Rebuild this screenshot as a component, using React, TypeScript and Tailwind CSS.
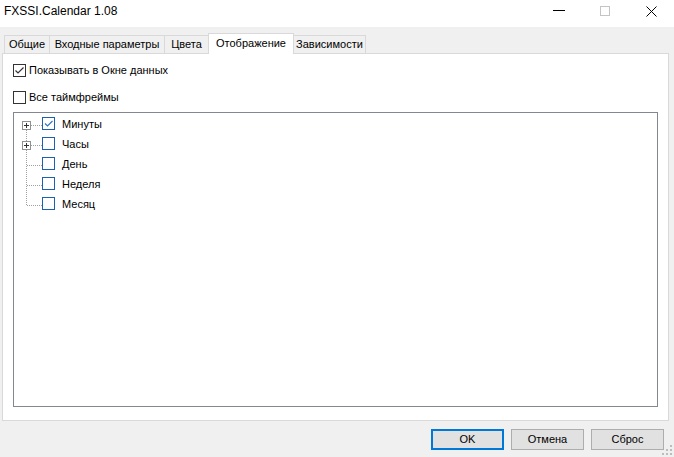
import React from "react";

function TopCheck({ checked }: { checked: boolean }) {
  return (
    <div className="w-[13px] h-[13px] border border-[#333333] bg-white shrink-0 flex items-center justify-center">
      {checked && (
        <svg width="11" height="11" viewBox="0 0 11 11">
          <polyline points="1.5,5.5 4,8 9.5,2.5" fill="none" stroke="#333333" strokeWidth="1.2" />
        </svg>
      )}
    </div>
  );
}

function TreeCheck({ checked }: { checked: boolean }) {
  return (
    <div className="w-[13px] h-[13px] border border-[#1e60b0] bg-white shrink-0 flex items-center justify-center">
      {checked && (
        <svg width="11" height="11" viewBox="0 0 11 11">
          <polyline points="2,5.5 4.5,8 9.5,3" fill="none" stroke="#2f76c8" strokeWidth="1.2" />
        </svg>
      )}
    </div>
  );
}

function TreeLines() {
  const rows = [11.5, 31.5, 51.5, 71.5, 91.5];
  return (
    <svg width="28" height="100" viewBox="0 0 28 100" className="shrink-0">
      <line x1="12.5" y1="16" x2="12.5" y2="92" stroke="#a0a0a0" strokeDasharray="1 1" />
      {rows.map((y, i) => (
        <line key={i} x1={i < 2 ? 17 : 13} y1={y} x2="28" y2={y} stroke="#a0a0a0" strokeDasharray="1 1" />
      ))}
      {[0, 1].map((i) => {
        const cy = rows[i];
        return (
          <g key={i}>
            <rect x="8.5" y={cy - 4} width="8" height="8" fill="white" stroke="#919191" />
            <line x1="10" y1={cy} x2="15" y2={cy} stroke="#333333" />
            <line x1="12.5" y1={cy - 2.5} x2="12.5" y2={cy + 2.5} stroke="#333333" />
          </g>
        );
      })}
    </svg>
  );
}

export default function App() {
  const tabs = [
    { label: "Общие", w: "w-[46px]" },
    { label: "Входные параметры", w: "w-[116px]" },
    { label: "Цвета", w: "w-[45px]" },
    { label: "Отображение", w: "w-[86px]", active: true },
    { label: "Зависимости", w: "w-[73px]" },
  ];
  const items = [
    { label: "Минуты", checked: true },
    { label: "Часы", checked: false },
    { label: "День", checked: false },
    { label: "Неделя", checked: false },
    { label: "Месяц", checked: false },
  ];
  return (
    <div className="relative w-[674px] h-[457px] bg-[#f0f0f0] flex flex-col overflow-hidden font-['Liberation_Sans',Arial,sans-serif] text-[11px] text-black leading-none">
      {/* title bar */}
      <div className="h-[27px] bg-white flex items-start shrink-0">
        <div className="h-[22px] flex items-center pl-[4px] text-[12px]">FXSSI.Calendar 1.08</div>
        <div className="ml-auto flex h-[22px]">
          <div className="w-[46px] h-full flex items-center justify-center">
            <svg width="12" height="2" viewBox="0 0 12 2">
              <line x1="0" y1="0.5" x2="12" y2="0.5" stroke="#000" />
            </svg>
          </div>
          <div className="w-[46px] h-full flex items-center justify-center">
            <svg width="10" height="10" viewBox="0 0 10 10">
              <rect x="0.5" y="0.5" width="9" height="9" fill="none" stroke="#c4c4c4" />
            </svg>
          </div>
          <div className="w-[46px] h-full flex items-center justify-center">
            <svg width="11" height="11" viewBox="0 0 11 11">
              <line x1="0.5" y1="0.5" x2="10.5" y2="10.5" stroke="#000" />
              <line x1="10.5" y1="0.5" x2="0.5" y2="10.5" stroke="#000" />
            </svg>
          </div>
        </div>
      </div>

      {/* tabs */}
      <div className="h-[26px] flex items-end pl-[4px] shrink-0">
        {tabs.map((t, i) =>
          t.active ? (
            <div
              key={i}
              className={`${t.w} -ml-px relative z-10 -mb-px h-[21px] bg-white border border-b-0 border-[#d9d9d9] flex items-center justify-center pb-[2px] whitespace-nowrap`}
            >
              {t.label}
            </div>
          ) : (
            <div
              key={i}
              className={`${t.w} ${i > 0 ? "-ml-px" : ""} h-[18px] bg-[#f0f0f0] border border-b-0 border-[#d9d9d9] flex items-center justify-center whitespace-nowrap`}
            >
              {t.label}
            </div>
          )
        )}
      </div>

      {/* panel */}
      <div className="ml-[2px] w-[667px] h-[368px] border border-[#d9d9d9] bg-white flex flex-col px-[10px] pt-[10px] pb-[13px] shrink-0">
        <div className="flex items-center h-[13px] gap-[3px]">
          <TopCheck checked={true} />
          <span>Показывать в Окне данных</span>
        </div>
        <div className="flex items-center h-[13px] gap-[3px] mt-[14px]">
          <TopCheck checked={false} />
          <span>Все таймфреймы</span>
        </div>
        <div className="mt-[8px] flex-1 border border-[#828790] bg-white flex pt-[1px]">
          <TreeLines />
          <div className="flex flex-col">
            {items.map((it, i) => (
              <div key={i} className="h-[20px] flex items-start">
                <div className="mt-[3px]">
                  <TreeCheck checked={it.checked} />
                </div>
                <span className="ml-[7px] mt-[5px]">{it.label}</span>
              </div>
            ))}
          </div>
        </div>
      </div>

      {/* buttons */}
      <div className="flex justify-end gap-[7px] pt-[8px] pr-[10px]">
        <button className="w-[73px] h-[21px] bg-[#e1e1e1] border-2 border-[#0078d7] flex items-center justify-center">
          OK
        </button>
        <button className="w-[73px] h-[21px] bg-[#e1e1e1] border border-[#adadad] flex items-center justify-center">
          Отмена
        </button>
        <button className="w-[73px] h-[21px] bg-[#e1e1e1] border border-[#adadad] flex items-center justify-center">
          Сброс
        </button>
      </div>

      {/* resize grip */}
      <svg width="12" height="12" viewBox="0 0 12 12" className="absolute right-[1px] bottom-[1px]">
        <rect x="9" y="1" width="2" height="2" fill="#bcbcbc" />
        <rect x="5" y="5" width="2" height="2" fill="#bcbcbc" />
        <rect x="9" y="5" width="2" height="2" fill="#bcbcbc" />
        <rect x="1" y="9" width="2" height="2" fill="#bcbcbc" />
        <rect x="5" y="9" width="2" height="2" fill="#bcbcbc" />
        <rect x="9" y="9" width="2" height="2" fill="#bcbcbc" />
      </svg>
    </div>
  );
}
